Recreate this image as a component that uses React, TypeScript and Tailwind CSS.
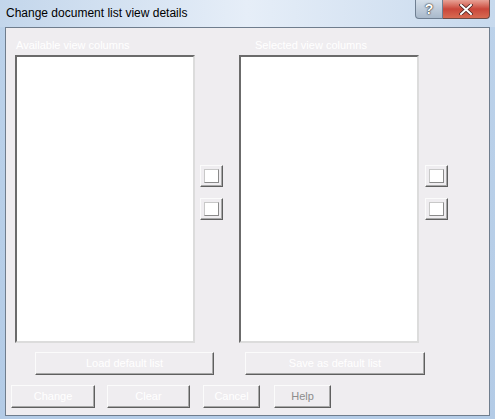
import React from "react";

const btn =
  "flex items-center justify-center h-[23px] border border-t-[#fbfbfb] border-l-[#fbfbfb] border-r-[#5f5f5f] border-b-[#5f5f5f] shadow-[inset_-1px_-1px_0_#a9a9a9] bg-[#efedf0] text-[11px] text-white";

const listBox =
  "h-[288px] bg-white border-2 border-t-[#6b6b6b] border-l-[#6b6b6b] border-r-[#dcdcdc] border-b-[#dcdcdc]";

const SmallButton = () => (
  <div className="w-[23px] h-[22px] p-[3px] border border-t-[#fbfbfb] border-l-[#fbfbfb] border-r-[#5f5f5f] border-b-[#5f5f5f] shadow-[inset_-1px_-1px_0_#a9a9a9] bg-[#efedf0]">
    <div className="w-full h-full bg-white border border-t-[#c8c8c8] border-l-[#c8c8c8] border-r-[#8a8a8a] border-b-[#8a8a8a]" />
  </div>
);

const ListColumn = ({ label, indent }: { label: string; indent: string }) => (
  <div className="flex flex-col w-[180px]">
    <div className={`h-[19px] ${indent} text-[11px] leading-[19px] text-white`}>{label}</div>
    <div className={listBox} />
  </div>
);

const ButtonColumn = () => (
  <div className="flex flex-col gap-[11px] pt-[129px]">
    <SmallButton />
    <SmallButton />
  </div>
);

export default function App() {
  return (
    <div
      className="w-[495px] h-[419px] flex flex-col bg-gradient-to-b from-[#bcd2ea] to-[#b3cbe6] overflow-hidden"
      style={{ fontFamily: '"Liberation Sans", Arial, sans-serif' }}
    >
      {/* title bar */}
      <div className="h-[27px] flex items-start bg-gradient-to-r from-[#c3d6eb] via-[#e6eef8] to-[#c7d9ed]">
        <div className="pl-[6px] pt-[6px] text-[12px] leading-[15px] text-black">
          Change document list view details
        </div>
        <div className="ml-auto mr-[5px] flex">
          <div className="w-[28px] h-[19px] flex items-center justify-center rounded-bl-[4px] border border-t-0 border-[#6f7f92] bg-gradient-to-b from-[#d5dfea] to-[#a9b9cb] text-white text-[14px] font-bold leading-none [text-shadow:0_0_1px_#222,0_0_2px_#222]">
            ?
          </div>
          <div className="w-[47px] h-[19px] flex items-center justify-center rounded-br-[4px] border border-t-0 border-l-0 border-[#6f4a44] bg-gradient-to-b from-[#e7a196] via-[#c9463a] to-[#d76a52]">
            <svg width="14" height="11" viewBox="0 0 14 11">
              <path d="M2 1 L12 10 M12 1 L2 10" stroke="#4b2420" strokeWidth="3.6" strokeLinecap="square" />
              <path d="M2 1 L12 10 M12 1 L2 10" stroke="#ffffff" strokeWidth="2" strokeLinecap="square" />
            </svg>
          </div>
        </div>
      </div>

      {/* client area */}
      <div className="flex-1 mx-[5px] mb-[3px] flex flex-col border border-[#6f7d8d] bg-[#efedf0]">
        <div className="flex pt-[8px] pl-[9px]">
          <ListColumn label="Available view columns" indent="pl-[1px]" />
          <div className="ml-[5px]">
            <ButtonColumn />
          </div>
          <div className="ml-[16px]">
            <ListColumn label="Selected view columns" indent="pl-[16px]" />
          </div>
          <div className="ml-[6px]">
            <ButtonColumn />
          </div>
        </div>

        <div className="flex mt-[9px] pl-[29px]">
          <div className={`${btn} w-[179px]`}>Load default list</div>
          <div className={`${btn} w-[180px] ml-[31px]`}>Save as default list</div>
        </div>

        <div className="flex mt-[10px] pl-[5px]">
          <div className={`${btn} w-[84px]`}>Change</div>
          <div className={`${btn} w-[83px] ml-[12px]`}>Clear</div>
          <div className={`${btn} w-[57px] ml-[13px]`}>Cancel</div>
          <div className={`${btn} w-[57px] ml-[14px] !text-[#8c8c8c]`}>Help</div>
        </div>
      </div>
    </div>
  );
}
